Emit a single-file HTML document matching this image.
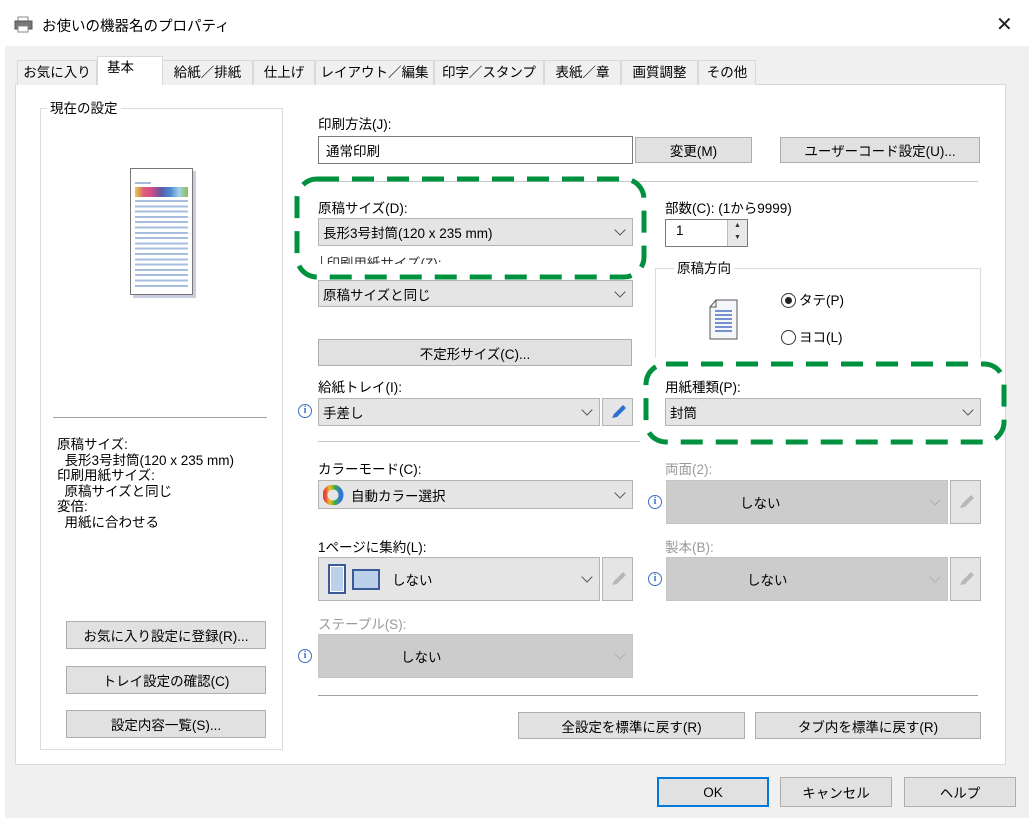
<!DOCTYPE html>
<html><head><meta charset="utf-8"><style>
*{box-sizing:border-box;margin:0;padding:0}
body{width:1029px;height:823px;background:#fff;position:relative;overflow:hidden;font-family:"Liberation Sans","Noto Sans CJK JP",sans-serif;font-size:13.5px;color:#000}
.a{position:absolute;white-space:nowrap}
.lbl{position:absolute;white-space:nowrap;font-size:13.5px;line-height:16px}
.btn{position:absolute;background:#e1e1e1;border:1px solid #adadad;text-align:center;font-size:13.5px;display:flex;align-items:center;justify-content:center}
.sel{position:absolute;background:#e5e5e5;border:1px solid #b4b4b4;font-size:13.5px;display:flex;align-items:center;padding-left:4px}
.sel .cv{position:absolute;right:8px;top:50%;width:8px;height:8px;border-right:1.3px solid #555;border-bottom:1.3px solid #555;transform:translateY(-75%) rotate(45deg)}
.dis{background:#cccccc;border-color:#c4c4c4}
.dis .cv{border-color:#b0b0b0}
.pen{position:absolute;background:#e5e5e5;border:1px solid #b4b4b4}
.info{position:absolute;width:14px;height:14px;border:1.3px solid #3b6fc4;border-radius:50%;color:#3b6fc4;font-size:10px;line-height:11px;text-align:center;font-family:"Liberation Serif",serif;font-weight:bold}
.hl{position:absolute;height:1px;background:#a0a0a0}
.tab{position:absolute;top:60px;height:25px;background:#f0f0f0;border:1px solid #d9d9d9;border-bottom:none;font-size:13.5px;line-height:24px;text-align:center}
.gray{color:#9a9a9a}
</style></head><body>
<!-- title bar -->
<svg class="a" style="left:14px;top:16px" width="20" height="18"><rect x="4" y="1" width="10" height="5" fill="#fff" stroke="#888"/><rect x="1" y="5" width="17" height="8" fill="#777" stroke="#555"/><rect x="4" y="10" width="10" height="6" fill="#fff" stroke="#888"/></svg>
<div class="a" style="left:42px;top:15px;font-size:14.5px">お使いの機器名のプロパティ</div>
<div class="a" style="left:996px;top:12px;font-size:20px;color:#222">✕</div>
<!-- gray dialog -->
<div class="a" style="left:5px;top:46px;width:1024px;height:772px;background:#f0f0f0"></div>
<!-- panel -->
<div class="a" style="left:15px;top:84px;width:991px;height:681px;background:#fff;border:1px solid #d9d9d9"></div>
<!-- tabs -->
<div class="tab" style="left:17px;width:80px">お気に入り</div>
<div class="tab" style="left:97px;top:56px;height:29px;width:66px;background:#fff;text-align:left;padding-left:9px;line-height:22px;z-index:2">基本</div>
<div class="tab" style="left:162px;width:91px">給紙／排紙</div>
<div class="tab" style="left:253px;width:62px">仕上げ</div>
<div class="tab" style="left:315px;width:119px">レイアウト／編集</div>
<div class="tab" style="left:434px;width:110px">印字／スタンプ</div>
<div class="tab" style="left:544px;width:77px">表紙／章</div>
<div class="tab" style="left:621px;width:77px">画質調整</div>
<div class="tab" style="left:698px;width:58px">その他</div>
<div class="a" style="left:98px;top:84px;width:64px;height:2px;background:#fff;z-index:3"></div>

<!-- left group -->
<div class="a" style="left:40px;top:108px;width:243px;height:642px;border:1px solid #dcdcdc"></div>
<div class="lbl" style="left:47px;top:101px;background:#fff;padding:0 3px">現在の設定</div>
<div class="a" style="left:130px;top:168px;width:63px;height:127px;background:#fff;border:1px solid #777;box-shadow:3px 3px 0 #c8cde0"></div>
<div class="a" style="left:135px;top:182px;width:16px;height:2px;background:#a9bbd9"></div>
<div class="a" style="left:135px;top:187px;width:53px;height:10px;background:linear-gradient(90deg,#e8c94a,#e05d7b,#c94d8a,#5b5aa8,#4a8bd0,#9fd0e8,#8cc04c)"></div>
<div class="a" style="left:135px;top:200px;width:53px;height:88px;background:repeating-linear-gradient(#a7bddf 0 2px,#fff 2px 5.3px)"></div>
<div class="hl" style="left:53px;top:417px;width:214px"></div>
<div class="a" style="left:57px;top:437px;line-height:15.5px;font-size:13.5px">原稿サイズ:<br>&nbsp;&nbsp;長形3号封筒(120 x 235 mm)<br>印刷用紙サイズ:<br>&nbsp;&nbsp;原稿サイズと同じ<br>変倍:<br>&nbsp;&nbsp;用紙に合わせる</div>
<div class="btn" style="left:66px;top:621px;width:200px;height:28px">お気に入り設定に登録(R)...</div>
<div class="btn" style="left:66px;top:666px;width:200px;height:28px">トレイ設定の確認(C)</div>
<div class="btn" style="left:66px;top:710px;width:200px;height:28px">設定内容一覧(S)...</div>

<!-- middle column -->
<div class="lbl" style="left:318px;top:117px">印刷方法(J):</div>
<div class="a" style="left:318px;top:136px;width:315px;height:28px;border:1px solid #7a7a7a;background:#fff;padding:3px 0 0 7px">通常印刷</div>
<div class="btn" style="left:635px;top:137px;width:117px;height:26px">変更(M)</div>
<div class="btn" style="left:780px;top:137px;width:200px;height:26px">ユーザーコード設定(U)...</div>
<div class="hl" style="left:318px;top:181px;width:660px;background:#c8c8c8"></div>

<div class="lbl" style="left:318px;top:201px">原稿サイズ(D):</div>
<div class="sel" style="left:318px;top:218px;width:315px;height:28px">長形3号封筒(120 x 235 mm)<span class="cv"></span></div>
<div class="lbl" style="left:318px;top:256px;height:8px;overflow:hidden;color:#333">│印刷用紙サイズ(Z):</div>
<div class="sel" style="left:318px;top:280px;width:315px;height:27px;padding-top:0">原稿サイズと同じ<span class="cv"></span></div>
<div class="btn" style="left:318px;top:339px;width:314px;height:27px">不定形サイズ(C)...</div>

<div class="lbl" style="left:318px;top:380px">給紙トレイ(I):</div>
<div class="info" style="left:298px;top:404px">i</div>
<div class="sel" style="left:318px;top:398px;width:282px;height:28px">手差し<span class="cv"></span></div>
<div class="pen" style="left:602px;top:398px;width:31px;height:28px"><svg width="29" height="26"><path d="M9 19 L11 15 L20 6 L23 9 L14 18 Z" fill="#2f6fd0"/></svg></div>
<div class="hl" style="left:318px;top:441px;width:322px;background:#c8c8c8"></div>

<div class="lbl" style="left:318px;top:462px">カラーモード(C):</div>
<div class="sel" style="left:318px;top:480px;width:315px;height:29px"><svg width="22" height="20" style="margin-right:6px"><circle cx="10" cy="10" r="8" fill="none" stroke="url(#g)" stroke-width="5"/><defs><linearGradient id="g"><stop offset="0" stop-color="#e84040"/><stop offset=".3" stop-color="#f0c020"/><stop offset=".6" stop-color="#40b040"/><stop offset="1" stop-color="#3070e0"/></linearGradient></defs></svg>自動カラー選択<span class="cv"></span></div>

<div class="lbl" style="left:318px;top:540px">1ページに集約(L):</div>
<div class="sel" style="left:318px;top:557px;width:282px;height:44px;padding-left:9px"><span style="display:inline-block;width:18px;height:30px;border:2px solid #3a5a9a;background:#bcd0ea;outline:1px solid #fff;outline-offset:-3px"></span><span style="display:inline-block;width:28px;height:21px;border:2px solid #3a5a9a;background:#bcd0ea;margin-left:6px"></span><span style="margin-left:12px">しない</span><span class="cv"></span></div>
<div class="pen dis" style="left:602px;top:557px;width:31px;height:44px"><svg width="29" height="42"><path d="M9 27 L11 23 L20 14 L23 17 L14 26 Z" fill="#b8b8b8"/></svg></div>

<div class="lbl gray" style="left:318px;top:617px">ステープル(S):</div>
<div class="info" style="left:298px;top:649px">i</div>
<div class="sel dis" style="left:318px;top:634px;width:315px;height:44px;padding-left:82px">しない<span class="cv"></span></div>
<div class="hl" style="left:318px;top:695px;width:660px"></div>
<div class="btn" style="left:518px;top:712px;width:227px;height:27px">全設定を標準に戻す(R)</div>
<div class="btn" style="left:755px;top:712px;width:226px;height:27px">タブ内を標準に戻す(R)</div>

<!-- right column -->
<div class="lbl" style="left:665px;top:201px">部数(C): (1から9999)</div>
<div class="a" style="left:665px;top:219px;width:83px;height:28px;border:1px solid #7a7a7a;background:#fff;padding:3px 0 0 10px">1</div>
<div class="a" style="left:727px;top:220px;width:20px;height:26px;background:#e8e8e8;border-left:1px solid #bbb;font-size:7px;line-height:12px;text-align:center;color:#333">▲<br>▼</div>
<div class="a" style="left:655px;top:268px;width:326px;height:90px;border:1px solid #dcdcdc;border-bottom:none"></div>
<div class="lbl" style="left:674px;top:261px;background:#fff;padding:0 3px">原稿方向</div>
<svg class="a" style="left:708px;top:298px" width="32" height="44"><path d="M8 2 H29 V41 H2 V9 Z" fill="#f4f6fa" stroke="#555"/><path d="M8 2 V9 H2" fill="none" stroke="#555"/><path d="M7 13h17M7 17h17M7 21h17M7 25h17M7 29h17M7 33h17" stroke="#4a6fc0" stroke-width="1.5"/></svg>
<div class="a" style="left:781px;top:293px;width:15px;height:15px;border:1.3px solid #333;border-radius:50%"></div>
<div class="a" style="left:785px;top:297px;width:7px;height:7px;background:#222;border-radius:50%"></div>
<div class="lbl" style="left:799px;top:293px">タテ(P)</div>
<div class="a" style="left:781px;top:330px;width:15px;height:15px;border:1.3px solid #333;border-radius:50%"></div>
<div class="lbl" style="left:799px;top:330px">ヨコ(L)</div>

<div class="lbl" style="left:665px;top:380px">用紙種類(P):</div>
<div class="sel" style="left:665px;top:398px;width:316px;height:28px">封筒<span class="cv"></span></div>

<div class="lbl gray" style="left:665px;top:462px">両面(2):</div>
<div class="info" style="left:648px;top:495px">i</div>
<div class="sel dis" style="left:666px;top:480px;width:282px;height:44px;padding-left:73px">しない<span class="cv"></span></div>
<div class="pen dis" style="left:950px;top:480px;width:31px;height:44px"><svg width="29" height="42"><path d="M9 27 L11 23 L20 14 L23 17 L14 26 Z" fill="#b8b8b8"/></svg></div>
<div class="lbl gray" style="left:665px;top:540px">製本(B):</div>
<div class="info" style="left:648px;top:572px">i</div>
<div class="sel dis" style="left:666px;top:557px;width:282px;height:44px;padding-left:80px">しない<span class="cv"></span></div>
<div class="pen dis" style="left:950px;top:557px;width:31px;height:44px"><svg width="29" height="42"><path d="M9 27 L11 23 L20 14 L23 17 L14 26 Z" fill="#b8b8b8"/></svg></div>

<!-- dashed highlights -->
<svg class="a" style="left:0;top:0" width="1029" height="823">
<rect x="297" y="179" width="347" height="98" rx="20" fill="none" stroke="#00913f" stroke-width="5" stroke-dasharray="22 13"/>
<rect x="646" y="364" width="358" height="78" rx="20" fill="none" stroke="#00913f" stroke-width="5" stroke-dasharray="22 13"/>
</svg>

<!-- bottom buttons -->
<div class="btn" style="left:657px;top:777px;width:112px;height:30px;border:2px solid #0078d7">OK</div>
<div class="btn" style="left:780px;top:777px;width:112px;height:30px">キャンセル</div>
<div class="btn" style="left:904px;top:777px;width:112px;height:30px">ヘルプ</div>
</body></html>
